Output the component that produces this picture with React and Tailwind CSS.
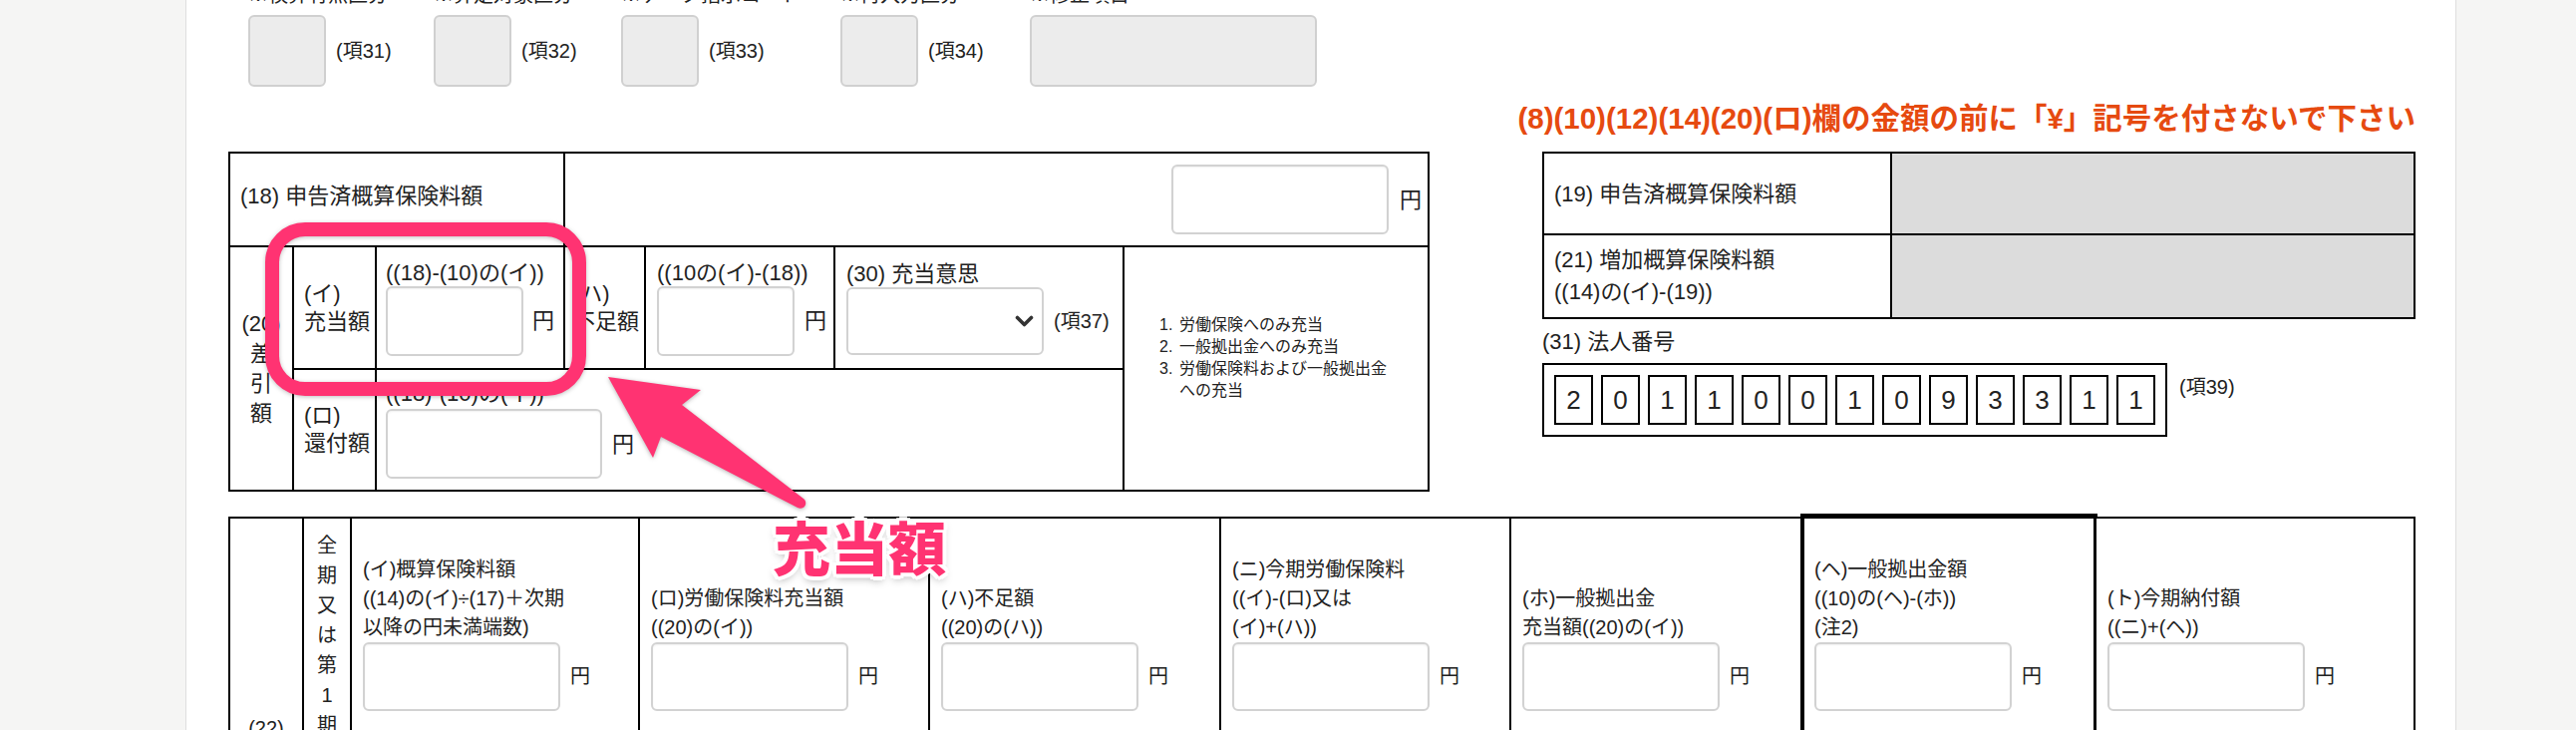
import React from "react";

function Field({ className }) {
  return (
    <div
      className={
        "shrink-0 rounded-[6px] border-2 border-[#d2d2d2] bg-white shadow-[inset_0_1px_2px_rgba(0,0,0,0.06)] " +
        className
      }
    />
  );
}

function TopGroup({ label, code, w }) {
  return (
    <div className={"flex flex-col " + w}>
      <div className="h-[24px] whitespace-nowrap text-[20px] leading-[24px]">{label}</div>
      <div className="mt-[8px] flex h-[72px] items-center">
        <div className="h-[72px] w-[78px] rounded-[6px] border-2 border-[#d0d0d0] bg-[#ececec]" />
        <span className="ml-[10px] text-[20px]">{code}</span>
      </div>
    </div>
  );
}

function BottomCell({ lines, children }) {
  return (
    <div className="relative flex h-[256px] flex-col justify-end bg-white pb-[63px] pl-[11px] leading-[29px]">
      {children}
      {lines.map((l, i) => (
        <div key={i} className="whitespace-nowrap">
          {l}
        </div>
      ))}
      <div className="flex items-center">
        <Field className="h-[69px] w-[198px]" />
        <span className="ml-[10px]">円</span>
      </div>
    </div>
  );
}

export default function App() {
  const digits = ["2", "0", "1", "1", "0", "0", "1", "0", "9", "3", "3", "1", "1"];
  const vert = ["全", "期", "又", "は", "第", "1", "期", "("];
  return (
    <div className="flex h-[732px] w-[2584px] overflow-hidden bg-[#f5f5f4] text-[#222] [font-family:'Liberation_Sans','Noto_Sans_CJK_JP',sans-serif]">
      <div className="w-[186px] shrink-0" />
      <main className="relative h-[732px] w-[2278px] shrink-0 overflow-hidden border-x border-[#dedede] bg-white pl-[42px] pr-[40px]">
        {/* top row */}
        <div className="-mt-[17px] ml-[20px] flex">
          <TopGroup label="※検算有無区分" code="(項31)" w="w-[186px]" />
          <TopGroup label="※算定対象区分" code="(項32)" w="w-[188px]" />
          <TopGroup label="※データ指示コード" code="(項33)" w="w-[220px]" />
          <TopGroup label="※再入力区分" code="(項34)" w="w-[190px]" />
          <div className="flex flex-col">
            <div className="h-[24px] whitespace-nowrap text-[20px] leading-[24px]">※修正項目</div>
            <div className="mt-[8px] h-[72px] w-[288px] rounded-[6px] border-2 border-[#d0d0d0] bg-[#ececec]" />
          </div>
        </div>

        {/* red notice */}
        <div className="mt-[14px] flex justify-end">
          <div className="whitespace-nowrap text-[29.5px] font-bold leading-[36px] text-[#e64a10]">
            (8)(10)(12)(14)(20)(ロ)欄の金額の前に「¥」記号を付さないで下さい
          </div>
        </div>

        {/* tables row */}
        <div className="mt-[15px] flex items-start">
          <div className="grid h-[341px] w-[1205px] shrink-0 grid-cols-[62px_81px_187px_79px_188px_288px_304px] grid-rows-[92px_121px_120px] gap-[2px] bg-black p-[2px] text-[22px]">
            <div className="col-span-3 flex items-center bg-white pb-[8px] pl-[10px]">
              (18) 申告済概算保険料額
            </div>
            <div className="col-span-4 flex items-center justify-end bg-white pr-[6px]">
              <Field className="h-[70px] w-[218px]" />
              <span className="ml-[11px]">円</span>
            </div>

            <div className="row-span-2 flex flex-col items-center justify-center bg-white leading-[30px]">
              <div>(20)</div>
              <div>差</div>
              <div>引</div>
              <div>額</div>
            </div>
            <div className="flex flex-col justify-center bg-white pl-[10px] leading-[28px]">
              <div>(イ)</div>
              <div>充当額</div>
            </div>
            <div className="flex flex-col justify-center bg-white pl-[9px]">
              <div className="whitespace-nowrap leading-[26px]">((18)-(10)の(イ))</div>
              <div className="flex items-center">
                <Field className="h-[70px] w-[138px]" />
                <span className="ml-[9px]">円</span>
              </div>
            </div>
            <div className="flex flex-col justify-center bg-white pl-[8px] leading-[28px]">
              <div>(ハ)</div>
              <div>不足額</div>
            </div>
            <div className="flex flex-col justify-center bg-white pl-[11px]">
              <div className="whitespace-nowrap leading-[26px]">((10の(イ)-(18))</div>
              <div className="flex items-center">
                <Field className="h-[70px] w-[138px]" />
                <span className="ml-[10px]">円</span>
              </div>
            </div>
            <div className="flex flex-col justify-center bg-white pl-[11px]">
              <div className="whitespace-nowrap leading-[26px]">(30) 充当意思</div>
              <div className="flex items-center">
                <div className="flex h-[68px] w-[198px] shrink-0 items-center justify-end rounded-[6px] border-2 border-[#d2d2d2] bg-white pr-[8px]">
                  <svg width="19" height="14" viewBox="0 0 19 14">
                    <polyline
                      points="2.5,3.5 9.5,10.5 16.5,3.5"
                      fill="none"
                      stroke="#333"
                      strokeWidth="3.6"
                      strokeLinecap="round"
                      strokeLinejoin="round"
                    />
                  </svg>
                </div>
                <span className="ml-[10px] whitespace-nowrap text-[20px]">(項37)</span>
              </div>
            </div>
            <div className="row-span-2 bg-white pl-[35px] pt-[67px]">
              <ol className="text-[16px] leading-[22px]">
                <li className="flex">
                  <span className="w-[20px] shrink-0">1.</span>
                  <span>労働保険へのみ充当</span>
                </li>
                <li className="flex">
                  <span className="w-[20px] shrink-0">2.</span>
                  <span>一般拠出金へのみ充当</span>
                </li>
                <li className="flex">
                  <span className="w-[20px] shrink-0">3.</span>
                  <span>
                    労働保険料および一般拠出金
                    <br />
                    への充当
                  </span>
                </li>
              </ol>
            </div>

            <div className="flex flex-col justify-center bg-white pl-[10px] leading-[28px]">
              <div>(ロ)</div>
              <div>還付額</div>
            </div>
            <div className="col-span-4 flex flex-col justify-center bg-white pl-[9px]">
              <div className="whitespace-nowrap leading-[26px]">((18)-(10)の(イ))</div>
              <div className="mt-[2px] flex items-center">
                <Field className="h-[70px] w-[217px]" />
                <span className="ml-[10px]">円</span>
              </div>
            </div>
          </div>

          <div className="ml-auto flex w-[876px] shrink-0 flex-col">
            <div className="grid h-[168px] grid-cols-[347px_523px] grid-rows-[80px_82px] gap-[2px] bg-black p-[2px] text-[22px]">
              <div className="flex items-center bg-white pl-[10px]">(19) 申告済概算保険料額</div>
              <div className="bg-[#dcdcdc]" />
              <div className="flex flex-col justify-center bg-white pl-[10px] leading-[32px]">
                <div>(21) 増加概算保険料額</div>
                <div>((14)の(イ)-(19))</div>
              </div>
              <div className="bg-[#dcdcdc]" />
            </div>
            <div className="mt-[8px] text-[22px] leading-[30px]">(31) 法人番号</div>
            <div className="mt-[6px] flex items-start">
              <div className="flex gap-[8px] border-2 border-black p-[10px]">
                {digits.map((d, i) => (
                  <div
                    key={i}
                    className="flex h-[50px] w-[39px] items-center justify-center border-2 border-black text-[26px]"
                  >
                    {d}
                  </div>
                ))}
              </div>
              <span className="ml-[12px] mt-[9px] text-[20px] leading-[30px]">(項39)</span>
            </div>
          </div>
        </div>

        {/* bottom table */}
        <div className="mt-[25px] grid h-[260px] w-[2194px] grid-cols-[72px_46px_287px_289px_290px_289px_291px_292px_318px] grid-rows-[256px] gap-[2px] bg-black p-[2px] text-[20px]">
          <div className="flex h-[256px] justify-center overflow-hidden bg-white pt-[195px] leading-[30px]">(22)</div>
          <div className="flex h-[256px] flex-col items-center overflow-hidden bg-white pt-[12px] leading-[30px]">
            {vert.map((c, i) => (
              <div key={i}>{c}</div>
            ))}
          </div>
          <BottomCell lines={["(イ)概算保険料額", "((14)の(イ)÷(17)＋次期", "以降の円未満端数)"]} />
          <BottomCell lines={["(ロ)労働保険料充当額", "((20)の(イ))"]} />
          <BottomCell lines={["(ハ)不足額", "((20)の(ハ))"]} />
          <BottomCell lines={["(ニ)今期労働保険料", "((イ)-(ロ)又は", "(イ)+(ハ))"]} />
          <BottomCell lines={["(ホ)一般拠出金", "充当額((20)の(イ))"]} />
          <BottomCell lines={["(ヘ)一般拠出金額", "((10)の(ヘ)-(ホ))", "(注2)"]}>
            <div className="pointer-events-none absolute -left-[3px] -right-[3px] -top-[5px] bottom-0 border-[4px] border-black" />
          </BottomCell>
          <BottomCell lines={["(ト)今期納付額", "((ニ)+(ヘ))"]} />
        </div>

        {/* annotations */}
        <div className="pointer-events-none absolute left-[79px] top-[223px] h-[174px] w-[322px] rounded-[40px] border-[14px] border-[#ff3372] drop-shadow-[0_1px_2px_rgba(0,0,0,0.25)]" />
        <svg
          className="pointer-events-none absolute left-[413px] top-[365px] drop-shadow-[0_1px_2px_rgba(0,0,0,0.3)]"
          width="220"
          height="155"
          viewBox="600 365 220 155"
        >
          <path
            d="M610 378 L703 391 L684 406 L806 500 C811 504 807 512 800 509 L663 438 L655 459 Z"
            fill="#ff3372"
          />
        </svg>
        <div className="pointer-events-none absolute left-[588px] top-[523px] whitespace-nowrap text-[58px] font-black leading-[58px] text-[#ff3372] [text-shadow:4px_0_0_#fff,-4px_0_0_#fff,0_4px_0_#fff,0_-4px_0_#fff,3px_3px_0_#fff,-3px_-3px_0_#fff,3px_-3px_0_#fff,-3px_3px_0_#fff,0_4px_8px_rgba(0,0,0,0.35)]">
          充当額
        </div>
      </main>
      <div className="flex-1" />
    </div>
  );
}
